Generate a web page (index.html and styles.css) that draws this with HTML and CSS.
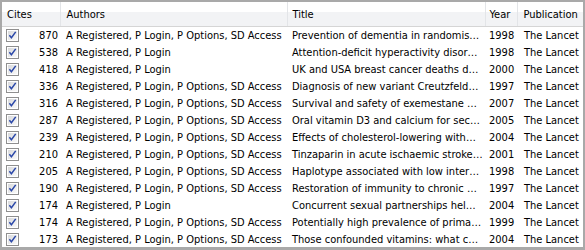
FILE: index.html
```html
<!DOCTYPE html>
<html>
<head>
<meta charset="utf-8">
<link rel="stylesheet" href="styles.css">
</head>
<body>
<svg class="defs" width="0" height="0">
  <defs>
    <linearGradient id="g" x1="0" y1="0" x2="1" y2="1">
      <stop offset="0" stop-color="#d8d9db"/>
      <stop offset="1" stop-color="#fafafa"/>
    </linearGradient>
    <symbol id="chk" viewBox="0 0 13 13">
      <rect x="0.5" y="0.5" width="12" height="12" fill="#fff" stroke="#8f8f8f"/>
      <rect x="2" y="2" width="9" height="9" fill="url(#g)"/>
      <path d="M3.4 6.3 L5.4 8.7 L9.7 2.9" fill="none" stroke="#2a47a8" stroke-width="1.5"/>
    </symbol>
  </defs>
</svg>
<div class="frame">
  <table class="grid">
    <colgroup>
      <col class="c-cites"><col class="c-authors"><col class="c-title"><col class="c-year"><col class="c-pub">
    </colgroup>
    <thead>
      <tr>
        <th class="h-cites">Cites</th>
        <th class="h-authors">Authors</th>
        <th class="h-title">Title</th>
        <th class="h-year">Year</th>
        <th class="h-pub">Publication</th>
      </tr>
    </thead>
    <tbody>
      <tr><td><div class="cell-cites"><svg class="chk"><use href="#chk"/></svg><span>870</span></div></td><td class="t-authors">A Registered, P Login, P Options, SD Access</td><td class="t-title">Prevention of dementia in randomis…</td><td class="t-year">1998</td><td class="t-pub">The Lancet</td></tr>
      <tr><td><div class="cell-cites"><svg class="chk"><use href="#chk"/></svg><span>538</span></div></td><td class="t-authors">A Registered, P Login</td><td class="t-title">Attention-deficit hyperactivity disor…</td><td class="t-year">1998</td><td class="t-pub">The Lancet</td></tr>
      <tr><td><div class="cell-cites"><svg class="chk"><use href="#chk"/></svg><span>418</span></div></td><td class="t-authors">A Registered, P Login</td><td class="t-title">UK and USA breast cancer deaths d…</td><td class="t-year">2000</td><td class="t-pub">The Lancet</td></tr>
      <tr><td><div class="cell-cites"><svg class="chk"><use href="#chk"/></svg><span>336</span></div></td><td class="t-authors">A Registered, P Login, P Options, SD Access</td><td class="t-title">Diagnosis of new variant Creutzfeld…</td><td class="t-year">1997</td><td class="t-pub">The Lancet</td></tr>
      <tr><td><div class="cell-cites"><svg class="chk"><use href="#chk"/></svg><span>316</span></div></td><td class="t-authors">A Registered, P Login, P Options, SD Access</td><td class="t-title">Survival and safety of exemestane …</td><td class="t-year">2007</td><td class="t-pub">The Lancet</td></tr>
      <tr><td><div class="cell-cites"><svg class="chk"><use href="#chk"/></svg><span>287</span></div></td><td class="t-authors">A Registered, P Login, P Options, SD Access</td><td class="t-title">Oral vitamin D3 and calcium for sec…</td><td class="t-year">2005</td><td class="t-pub">The Lancet</td></tr>
      <tr><td><div class="cell-cites"><svg class="chk"><use href="#chk"/></svg><span>239</span></div></td><td class="t-authors">A Registered, P Login, P Options, SD Access</td><td class="t-title">Effects of cholesterol-lowering with…</td><td class="t-year">2004</td><td class="t-pub">The Lancet</td></tr>
      <tr><td><div class="cell-cites"><svg class="chk"><use href="#chk"/></svg><span>210</span></div></td><td class="t-authors">A Registered, P Login, P Options, SD Access</td><td class="t-title">Tinzaparin in acute ischaemic stroke…</td><td class="t-year">2001</td><td class="t-pub">The Lancet</td></tr>
      <tr><td><div class="cell-cites"><svg class="chk"><use href="#chk"/></svg><span>205</span></div></td><td class="t-authors">A Registered, P Login, P Options, SD Access</td><td class="t-title">Haplotype associated with low inter…</td><td class="t-year">1998</td><td class="t-pub">The Lancet</td></tr>
      <tr><td><div class="cell-cites"><svg class="chk"><use href="#chk"/></svg><span>190</span></div></td><td class="t-authors">A Registered, P Login, P Options, SD Access</td><td class="t-title">Restoration of immunity to chronic …</td><td class="t-year">1997</td><td class="t-pub">The Lancet</td></tr>
      <tr><td><div class="cell-cites"><svg class="chk"><use href="#chk"/></svg><span>174</span></div></td><td class="t-authors">A Registered, P Login</td><td class="t-title">Concurrent sexual partnerships hel…</td><td class="t-year">2004</td><td class="t-pub">The Lancet</td></tr>
      <tr><td><div class="cell-cites"><svg class="chk"><use href="#chk"/></svg><span>174</span></div></td><td class="t-authors">A Registered, P Login, P Options, SD Access</td><td class="t-title">Potentially high prevalence of prima…</td><td class="t-year">1999</td><td class="t-pub">The Lancet</td></tr>
      <tr><td><div class="cell-cites"><svg class="chk"><use href="#chk"/></svg><span>173</span></div></td><td class="t-authors">A Registered, P Login, P Options, SD Access</td><td class="t-title">Those confounded vitamins: what c…</td><td class="t-year">2004</td><td class="t-pub">The Lancet</td></tr>
    </tbody>
  </table>
</div>
</body>
</html>
```
FILE: styles.css
```css
html, body { margin: 0; padding: 0; background: #fff; }
.defs { position: absolute; width: 0; height: 0; }
.frame {
  width: 585px;
  height: 250px;
  box-sizing: border-box;
  border-style: solid;
  border-color: #a9a9a9;
  border-width: 2px 2px 3px 2px;
  overflow: hidden;
  background: #fff;
  font-family: "DejaVu Sans Condensed", "DejaVu Sans", sans-serif;
  font-stretch: condensed;
  font-size: 11px;
  color: #000;
}
.grid {
  table-layout: fixed;
  border-collapse: collapse;
  width: 581px;
}
.c-cites { width: 58px; }
.c-authors { width: 227px; }
.c-title { width: 198px; }
.c-year { width: 32px; }
.c-pub { width: 66px; }
th {
  height: 24px;
  padding: 0;
  font-weight: normal;
  text-align: left;
  white-space: nowrap;
  overflow: hidden;
  background: linear-gradient(#ffffff 0, #ffffff 42%, #f2f3f5 43%, #f2f3f5 100%);
  border-right: 1px solid #e3e5e8;
  border-bottom: 1px solid #d5d5d5;
  color: #000;
}
th:last-child { border-right: none; }
.h-cites { padding-left: 5px; }
.h-authors { padding-left: 6px; }
.h-title { padding-left: 5px; }
.h-year { padding-left: 4px; }
.h-pub { padding-left: 6px; }
td {
  height: 17px;
  padding: 0;
  white-space: nowrap;
  overflow: hidden;
}
.cell-cites {
  display: flex;
  align-items: center;
  justify-content: space-between;
  padding: 0 2px 0 4px;
  height: 17px;
}
.chk { width: 13px; height: 13px; display: block; }
.t-authors { padding-left: 6px; }
.t-title { padding-left: 5px; }
.t-year { padding-left: 4px; }
.t-pub { padding-left: 7px; }
```
